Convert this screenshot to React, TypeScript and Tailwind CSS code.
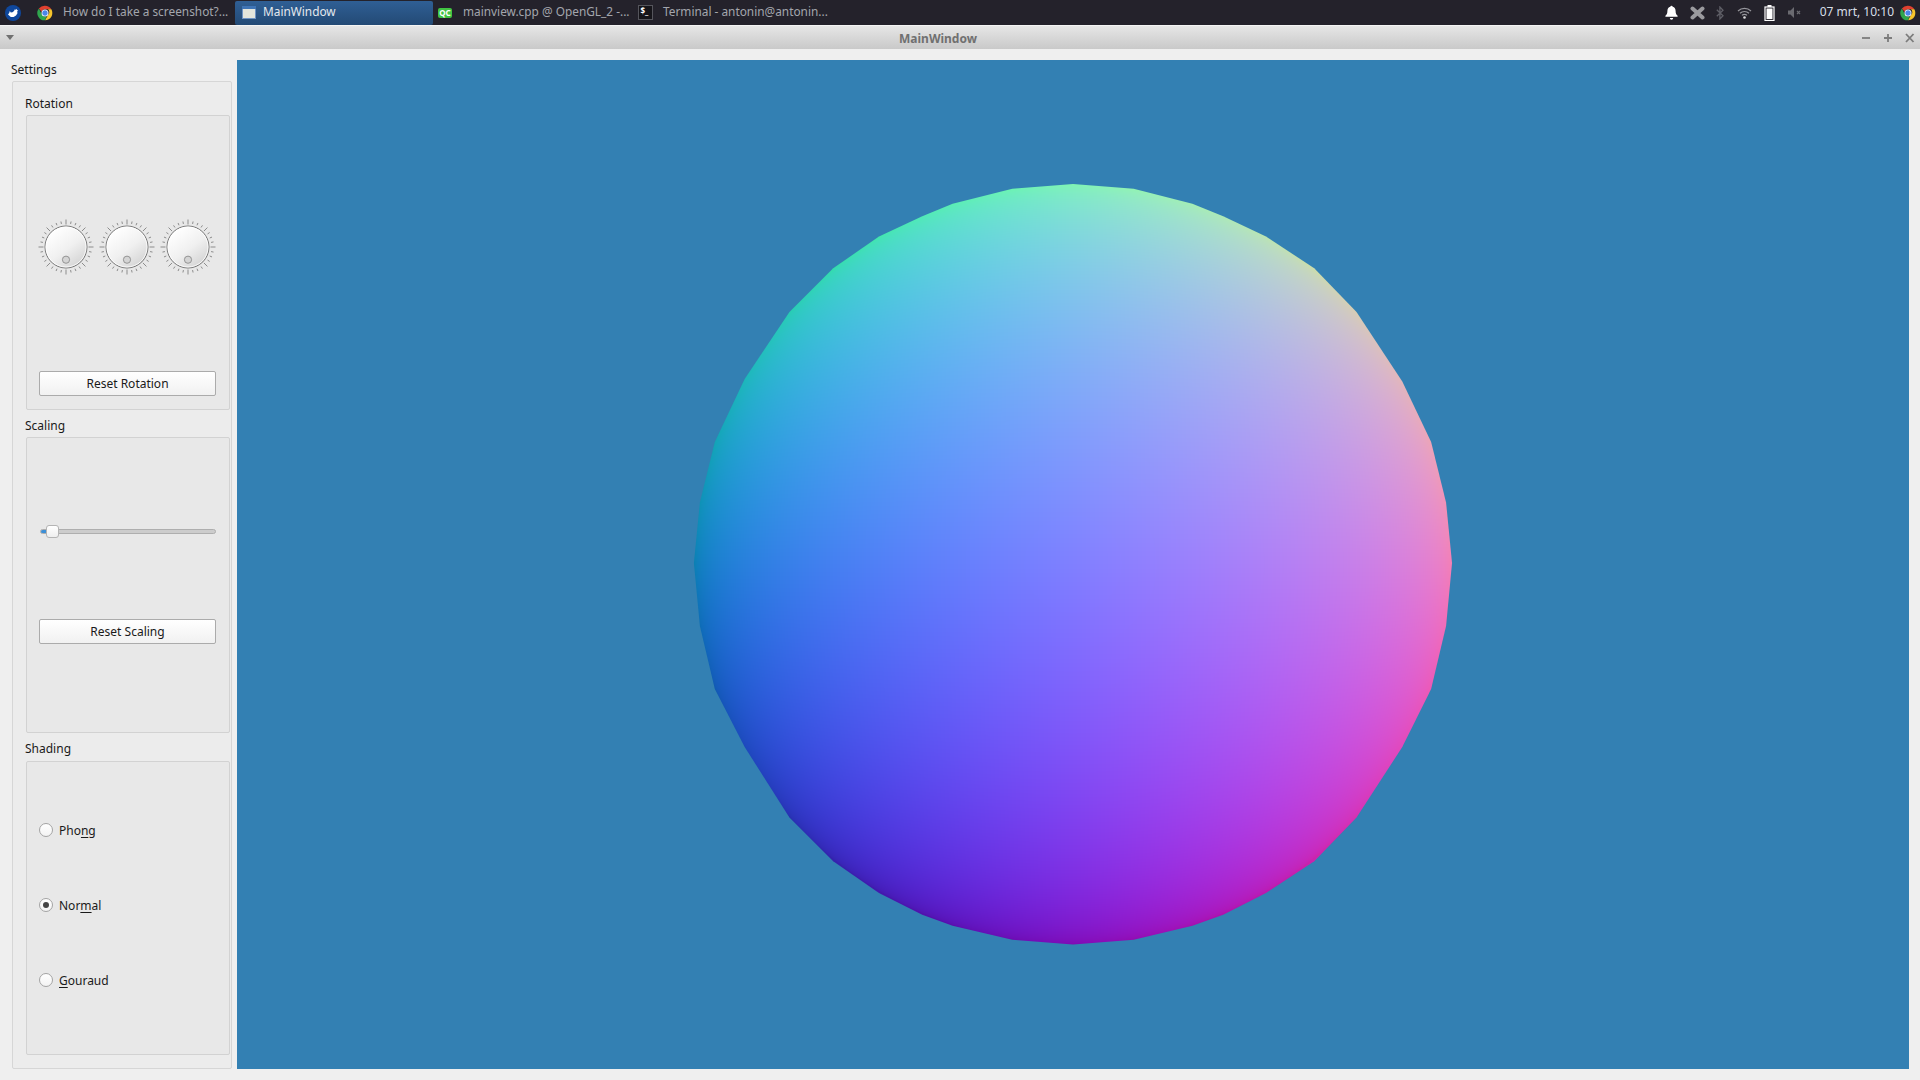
import React, { useEffect, useRef } from "react";

const sans = { fontFamily: '"Noto Sans", sans-serif' };

function Chrome({ size = 16 }: { size?: number }) {
  return (
    <svg width={size} height={size} viewBox="0 0 48 48" className="shrink-0">
      <path d="M24 2a22 22 0 0 1 19.05 11H24a11 11 0 0 0-10.2 6.9L5.6 10.6A22 22 0 0 1 24 2z" fill="#e0402f" />
      <path d="M43.05 13A22 22 0 0 1 24 46l9.5-16.5A11 11 0 0 0 33 13z" fill="#f7c52c" />
      <path d="M24 46A22 22 0 0 1 5.6 10.6L14.9 29.5A11 11 0 0 0 29 33.5z" fill="#2fa64d" />
      <circle cx="24" cy="24" r="10.5" fill="#fff" />
      <circle cx="24" cy="24" r="8" fill="#4a86e8" />
    </svg>
  );
}

function Logo() {
  return (
    <svg width="16" height="16" viewBox="0 0 16 16" className="shrink-0">
      <circle cx="8" cy="8" r="8" fill="#0f479c" />
      <path d="M3 9.500 4.200 8l.6-2 1 1.500L7.500 7.200 9 6l1-2 .6 1 1-1.200.4 1.400 1.200-.2-1 1.600.3 1.600L11 10.400 8.600 12H5.800L4.400 10.800z" fill="#fff" />
    </svg>
  );
}

function WinIcon() {
  return (
    <svg width="14" height="13" viewBox="0 0 14 13" className="shrink-0">
      <rect x="0.5" y="0.5" width="13" height="12" fill="#e3e5dc" stroke="#6f93c4" />
      <rect x="0" y="0" width="14" height="3" fill="#3f74b5" />
    </svg>
  );
}

function QcIcon() {
  return (
    <div className="flex h-[10px] w-[14px] shrink-0 items-center justify-center rounded-[2px] bg-[#41c443] text-[8px] font-bold leading-none text-white">
      QC
    </div>
  );
}

function TermIcon() {
  return (
    <div className="flex h-[15px] w-[15px] shrink-0 items-start justify-start border border-[#55555c] bg-[#16151a] pl-[2px] text-[8px] font-bold leading-[10px] text-white">
      $_
    </div>
  );
}

function TaskItem({ icon, text, width, active, gap = 10 }: { icon: React.ReactNode; text: string; width: number; active?: boolean; gap?: number }) {
  return (
    <div
      className={
        active
          ? "flex h-[24px] items-center rounded-[2px] bg-gradient-to-b from-[#2f5f95] to-[#234a75] pl-[5px] text-[#e4e8ee]"
          : "flex h-[24px] items-center text-[#a3a6ad]"
      }
      style={{ width }}
    >
      <div className="flex w-[18px] shrink-0 items-center justify-center">{icon}</div>
      <span className="mb-[2px] whitespace-nowrap text-[11.85px] leading-none" style={{ marginLeft: gap }}>
        {text}
      </span>
    </div>
  );
}

function TopBar() {
  return (
    <div className="flex h-[25px] shrink-0 items-center bg-[#24222b]" style={sans}>
      <div className="ml-[5px] flex w-[31px] shrink-0 items-center">
        <Logo />
      </div>
      <div className="flex w-[199px] shrink-0 items-center">
        <TaskItem icon={<Chrome size={16} />} text="How do I take a screenshot?..." width={199} gap={9} />
      </div>
      <TaskItem icon={<WinIcon />} text="MainWindow" width={198} active gap={5} />
      <div className="ml-[3px] flex">
        <TaskItem icon={<QcIcon />} text="mainview.cpp @ OpenGL_2 -..." width={200} gap={9} />
        <TaskItem icon={<TermIcon />} text="Terminal - antonin@antonin..." width={200} gap={9} />
      </div>
      <div className="ml-auto flex items-center">
        <svg width="13" height="15" viewBox="0 0 13 15" className="mr-[12px]">
          <path d="M6.500 0.800c.7 0 1.100.4 1.200 1 2 .5 2.900 2.200 2.900 4.200 0 2.600.8 3.600 2 4.800v1H.4v-1c1.200-1.200 2-2.200 2-4.800 0-2 .9-3.700 2.900-4.200.1-.6.500-1 1.200-1z" fill="#fff" />
          <path d="M4.800 13h3.400a1.700 1.700 0 0 1-3.400 0z" fill="#fff" />
        </svg>
        <svg width="15" height="14" viewBox="0 0 15 14" className="mr-[11px]">
          <path d="M2.500 2.500 12.500 11.500M12.500 2.500 2.500 11.500" stroke="#9a9a9e" strokeWidth="4" strokeLinecap="round" />
        </svg>
        <svg width="8" height="14" viewBox="0 0 8 14" className="mr-[13px]">
          <path d="M.8 3.800 7 9.800 3.900 13V1L7 4.200.8 10.200" stroke="#5e5e66" strokeWidth="1.300" fill="none" />
        </svg>
        <svg width="15" height="12" viewBox="0 0 15 12" className="mr-[12px]">
          <path d="M1 4a9.500 9.500 0 0 1 13 0M3 6.300a6.500 6.500 0 0 1 9 0M5 8.400a3.500 3.500 0 0 1 5 0" stroke="#96969c" strokeWidth="1.200" fill="none" />
          <circle cx="7.500" cy="10.500" r="1.300" fill="#d8d8da" />
        </svg>
        <svg width="11" height="16" viewBox="0 0 11 16" className="mr-[13px]">
          <rect x="3.500" y="0" width="4" height="2" fill="#fff" />
          <rect x="1" y="2" width="9" height="13.500" fill="none" stroke="#fff" strokeWidth="1.200" />
          <rect x="2.500" y="3.500" width="6" height="10.500" fill="#fff" />
        </svg>
        <svg width="13" height="11" viewBox="0 0 13 11" className="mr-[19px]">
          <path d="M0 3.500h2.500L6 0v11L2.500 7.500H0z" fill="#6a6a70" />
          <path d="M9 4l3 3M12 4 9 7" stroke="#6a6a70" strokeWidth="1.200" />
        </svg>
        <span className="mb-[2px] mr-[6px] whitespace-nowrap text-[12px] leading-none text-[#d7dfe8]">07 mrt, 10:10</span>
        <div className="mr-[4px]">
          <Chrome size={16} />
        </div>
      </div>
    </div>
  );
}

function TitleBar() {
  return (
    <div className="flex h-[23px] shrink-0 items-center bg-gradient-to-b from-[#e6e6e6] to-[#c9c9c9]" style={sans}>
      <div className="ml-[6px] h-0 w-0 border-x-[4px] border-t-[5px] border-x-transparent border-t-[#707070]" />
      <div className="flex-1 pt-[2px] text-center text-[12px] font-bold leading-none text-[#707070]">MainWindow</div>
      <svg width="56" height="12" viewBox="0 0 56 12" className="mr-[2px]">
        <path d="M0 6h8" stroke="#7c7c7c" strokeWidth="1.800" />
        <path d="M22 6h8M26 2v8M44 2l7.500 8M51.500 2 44 10" stroke="#7c7c7c" strokeWidth="1.800" />
      </svg>
    </div>
  );
}

function Dial() {
  const ticks = Array.from({ length: 32 }, (_, i) => i);
  return (
    <svg width="56" height="56" viewBox="-28 -28 56 56" className="shrink-0">
      <defs>
        <linearGradient id="dialfill" x1="0.2" y1="0.1" x2="0.8" y2="0.9">
          <stop offset="0" stopColor="#ffffff" />
          <stop offset="0.55" stopColor="#f0f0f0" />
          <stop offset="1" stopColor="#d6d6d6" />
        </linearGradient>
      </defs>
      {ticks.map((i) => {
        const a = (i * 11.25 * Math.PI) / 180;
        const long = i % 4 === 0;
        const r1 = long ? 22.5 : 23.5;
        const r2 = long ? 27.5 : 26;
        return (
          <line
            key={i}
            x1={Math.sin(a) * r1}
            y1={-Math.cos(a) * r1}
            x2={Math.sin(a) * r2}
            y2={-Math.cos(a) * r2}
            stroke="#8c8c8c"
            strokeWidth="1"
          />
        );
      })}
      <circle r="21" fill="url(#dialfill)" stroke="#747474" strokeWidth="1" />
      <circle r="20" fill="none" stroke="#ffffff" strokeWidth="0.8" />
      <circle cx="0" cy="12.700" r="3.600" fill="#d4d4d4" stroke="#8c8c8c" strokeWidth="0.9" />
    </svg>
  );
}

function Button({ children }: { children: React.ReactNode }) {
  return (
    <div className="ml-[12px] flex h-[25px] w-[177px] items-center justify-center rounded-[2px] border border-[#ababab] bg-gradient-to-b from-[#ffffff] to-[#f1f1f1] text-[12px] leading-none text-[#1a1a1a]">
      {children}
    </div>
  );
}

function Radio({ checked, children }: { checked?: boolean; children: React.ReactNode }) {
  return (
    <div className="flex h-[16px] items-center">
      <div className="flex h-[14px] w-[14px] shrink-0 items-center justify-center rounded-full border border-[#a4a4a4] bg-gradient-to-b from-[#ffffff] to-[#f3f3f3]">
        {checked && <div className="h-[6px] w-[6px] rounded-full bg-[#444444]" />}
      </div>
      <span className="ml-[6px] pt-[1px] text-[12px] leading-none text-[#1a1a1a]">{children}</span>
    </div>
  );
}

function Mn({ children }: { children: React.ReactNode }) {
  return <span className="underline decoration-1 underline-offset-[2px] [text-decoration-skip-ink:none]">{children}</span>;
}

function Label({ h, pb = 3, children }: { h: number; pb?: number; children: React.ReactNode }) {
  return (
    <div className="flex shrink-0 items-end text-[12px] leading-[16px] text-[#1a1a1a]" style={{ height: h, paddingBottom: pb }}>
      {children}
    </div>
  );
}

function Inner({ h, className, children }: { h: number; className?: string; children: React.ReactNode }) {
  return (
    <div className={"ml-[1px] flex w-[204px] shrink-0 flex-col rounded-[2px] border border-[#d2d2d2] bg-[#e8e8e8] " + (className ?? "")} style={{ height: h }}>
      {children}
    </div>
  );
}

function Sidebar() {
  return (
    <div className="flex w-[237px] shrink-0 flex-col pl-[12px]" style={sans}>
      <div className="-ml-[1px] flex h-[32px] shrink-0 items-end pb-[3px] text-[12px] leading-[16px] text-[#1a1a1a]">Settings</div>
      <div className="flex h-[988px] w-[220px] flex-col rounded-[2px] border border-[#d6d6d6] bg-[#ececec] pl-[12px]">
        <Label h={33}>Rotation</Label>
        <Inner h={295} className="pb-[13px] pt-[103px]">
          <div className="flex gap-[5px] pl-[11px]">
            <Dial />
            <Dial />
            <Dial />
          </div>
          <div className="mt-auto">
            <Button>Reset Rotation</Button>
          </div>
        </Inner>
        <Label h={27}>Scaling</Label>
        <Inner h={296} className="pb-[88px] pt-[91px]">
          <div className="relative ml-[13px] h-[5px] w-[176px] rounded-full border border-[#aeaeae] bg-[#cccccc]">
            <div className="h-full w-[8px] rounded-l-full bg-[#3d8fd6]" />
            <div className="absolute left-[5px] top-[-5px] h-[13px] w-[13px] rounded-[3px] border border-[#b4b4b4] bg-gradient-to-b from-[#ffffff] to-[#efefef]" />
          </div>
          <div className="mt-auto">
            <Button>Reset Scaling</Button>
          </div>
        </Inner>
        <Label h={28} pb={4}>Shading</Label>
        <Inner h={294} className="justify-start gap-[59px] pl-[12px] pt-[60px]">
          <Radio>
            Pho<Mn>n</Mn>g
          </Radio>
          <Radio checked>
            Nor<Mn>m</Mn>al
          </Radio>
          <Radio>
            <Mn>G</Mn>ouraud
          </Radio>
        </Inner>
      </div>
    </div>
  );
}

const outline = [
  790,28, 912,37, 1030,67, 1092,92, 1178,132, 1275,195, 1360,282, 1452,420, 1510,540, 1540,660, 1552,780, 1540,905, 1510,1030, 1452,1145, 1360,1285, 1275,1372, 1178,1435, 1092,1478, 1030,1500, 912,1528, 790,1537, 668,1528, 548,1500, 487,1478, 400,1435, 308,1372, 220,1285, 130,1145, 70,1030, 40,905, 28,780, 40,660, 70,540, 130,415, 220,282, 308,195, 400,132, 487,92, 548,67, 668,37,
];

function Sphere() {
  const ref = useRef<HTMLCanvasElement>(null);
  useEffect(() => {
    const canvas = ref.current;
    if (!canvas) return;
    const ctx = canvas.getContext("2d");
    if (!ctx) return;
    const W = 780;
    const H = 790;
    const sx = W / 1568;
    const sy = H / 1568;
    const cx = 790 * sx;
    const cy = 782.5 * sy;
    const rx = 762 * sx;
    const ry = 754.5 * sy;
    const d = 2.8;
    const sm = 1 / Math.sqrt(d * d - 1);
    const off = document.createElement("canvas");
    off.width = W;
    off.height = H;
    const octx = off.getContext("2d")!;
    const img = octx.createImageData(W, H);
    for (let y = 0; y < H; y++) {
      for (let x = 0; x < W; x++) {
        const px = ((x + 0.5 - cx) / rx) * sm;
        const py = (-(y + 0.5 - cy) / ry) * sm;
        const a = px * px + py * py + 1;
        const disc = Math.max(0, d * d - a * (d * d - 1));
        const k = (d - Math.sqrt(disc)) / a;
        const nx = k * px;
        const ny = k * py;
        const nz = d - k;
        const i = (y * W + x) * 4;
        img.data[i] = (nx * 0.5 + 0.5) * 255;
        img.data[i + 1] = (ny * 0.5 + 0.5) * 255;
        img.data[i + 2] = (nz * 0.5 + 0.5) * 255;
        img.data[i + 3] = 255;
      }
    }
    octx.putImageData(img, 0, 0);
    ctx.clearRect(0, 0, W, H);
    ctx.beginPath();
    for (let i = 0; i < outline.length; i += 2) {
      const x = outline[i] * sx;
      const y = outline[i + 1] * sy;
      if (i === 0) ctx.moveTo(x, y);
      else ctx.lineTo(x, y);
    }
    ctx.closePath();
    ctx.clip();
    ctx.drawImage(off, 0, 0);
  }, []);
  return <canvas ref={ref} width={780} height={790} className="shrink-0" />;
}

export default function App() {
  return (
    <div className="flex h-[1080px] w-[1920px] flex-col overflow-hidden bg-[#efefef]">
      <TopBar />
      <div className="h-px shrink-0 bg-[#f4f4f4]" />
      <TitleBar />
      <div className="flex min-h-0 flex-1">
        <Sidebar />
        <div className="flex-1 pb-[11px] pr-[11px] pt-[11px]">
          <div className="flex h-full w-full items-center justify-center bg-[#3380b3] pr-[6px]">
            <Sphere />
          </div>
        </div>
      </div>
    </div>
  );
}
